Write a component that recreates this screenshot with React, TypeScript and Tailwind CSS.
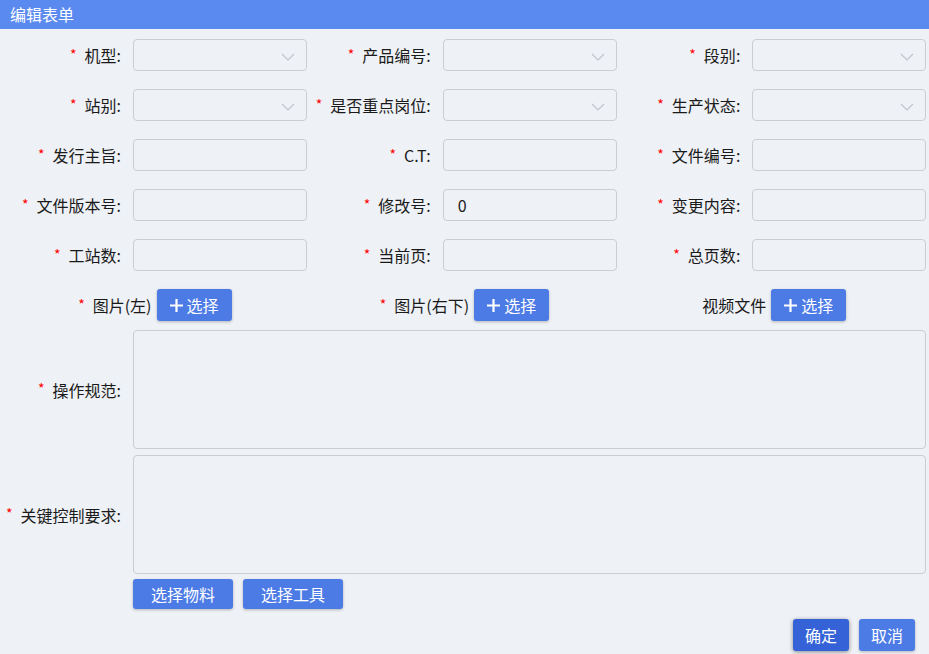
import type { ReactNode } from 'react';

type Field = { label: string; required?: boolean; kind: 'select' | 'input'; value?: string };

const fields: Field[] = [
  { label: '机型', required: true, kind: 'select' },
  { label: '产品编号', required: true, kind: 'select' },
  { label: '段别', required: true, kind: 'select' },
  { label: '站别', required: true, kind: 'select' },
  { label: '是否重点岗位', required: true, kind: 'select' },
  { label: '生产状态', required: true, kind: 'select' },
  { label: '发行主旨', required: true, kind: 'input' },
  { label: 'C.T', required: true, kind: 'input' },
  { label: '文件编号', required: true, kind: 'input' },
  { label: '文件版本号', required: true, kind: 'input' },
  { label: '修改号', required: true, kind: 'input', value: '0' },
  { label: '变更内容', required: true, kind: 'input' },
  { label: '工站数', required: true, kind: 'input' },
  { label: '当前页', required: true, kind: 'input' },
  { label: '总页数', required: true, kind: 'input' },
];

const uploads = [
  { label: '图片(左)', required: true },
  { label: '图片(右下)', required: true },
  { label: '视频文件', required: false },
];

function Star() {
  return <span className="text-[#f00] text-[14px] mr-[8px] -translate-y-[1px]">*</span>;
}

function Label({ children, required }: { children: ReactNode; required?: boolean }) {
  return (
    <div className="w-[133px] shrink-0 flex items-center justify-end pr-3 text-[16px] text-[#1a1a1a]">
      {required && <Star />}
      <span>{children}:</span>
    </div>
  );
}

function Chevron() {
  return (
    <svg width="14" height="8" viewBox="0 0 14 8" fill="none" className="absolute right-[11px] top-[13px]">
      <path d="M1 1l6 6 6-6" stroke="#c0c4cc" strokeWidth="1.2" />
    </svg>
  );
}

function PlusButton() {
  return (
    <button className="h-8 w-[75px] rounded-[3px] bg-[#4d7be6] text-white text-[16px] flex items-center justify-center gap-1 shadow-[0_1px_3px_rgba(0,0,0,0.25)]">
      <svg width="13" height="13" viewBox="0 0 13 13">
        <path d="M6.5 0v13M0 6.5h13" stroke="#fff" strokeWidth="2.2" />
      </svg>
      <span>选择</span>
    </button>
  );
}

export default function App() {
  return (
    <div className="w-[929px] h-[654px] bg-[#eef1f5] overflow-hidden flex flex-col" style={{ fontFamily: '"Noto Sans CJK SC", "Noto Sans", sans-serif' }}>
      {/* Header */}
      <div className="h-[29px] bg-[#5a8af0] text-white text-[16px] leading-[29px] pl-[10px] shrink-0">编辑表单</div>

      {/* Field grid */}
      <div className="grid grid-cols-3 gap-y-[18px] pt-[10px] shrink-0">
        {fields.map(f => (
          <div key={f.label} className="flex items-center h-8">
            <Label required={f.required}>{f.label}</Label>
            <div className="relative w-[174px] h-8 rounded-[4px] border border-[#cbcdd1] bg-[#eef1f5] text-[16px] text-[#1a1a1a] pl-[14px] leading-[30px]">
              {f.value}
              {f.kind === 'select' && <Chevron />}
            </div>
          </div>
        ))}
        {uploads.map(u => (
          <div key={u.label} className="flex items-center justify-center h-8 text-[16px] text-[#1a1a1a]">
            {u.required && <Star />}
            <span className="mr-[5px]">{u.label}</span>
            <PlusButton />
          </div>
        ))}
      </div>

      {/* Textareas */}
      <div className="flex mt-[9px] h-[119px] shrink-0">
        <Label required>操作规范</Label>
        <div className="flex-1 mr-[3px] rounded-[4px] border border-[#cbcdd1]" />
      </div>
      <div className="flex mt-[6px] h-[119px] shrink-0">
        <Label required>关键控制要求</Label>
        <div className="flex-1 mr-[3px] rounded-[4px] border border-[#cbcdd1]" />
      </div>

      {/* Material/tool buttons */}
      <div className="flex gap-[10px] pl-[133px] mt-[5px] shrink-0">
        <button className="h-[30px] w-[100px] rounded-[3px] bg-[#4d7be6] text-white text-[16px] shadow-[0_1px_3px_rgba(0,0,0,0.25)]">选择物料</button>
        <button className="h-[30px] w-[100px] rounded-[3px] bg-[#4d7be6] text-white text-[16px] shadow-[0_1px_3px_rgba(0,0,0,0.25)]">选择工具</button>
      </div>

      {/* Footer */}
      <div className="flex justify-end gap-[10px] pr-[14px] mt-[10px] shrink-0">
        <button className="h-8 w-14 rounded-[3px] bg-[#3562d6] text-white text-[16px] shadow-[0_1px_4px_rgba(0,0,0,0.45)]">确定</button>
        <button className="h-8 w-14 rounded-[3px] bg-[#4d7be6] text-white text-[16px] shadow-[0_1px_3px_rgba(0,0,0,0.25)]">取消</button>
      </div>
    </div>
  );
}
